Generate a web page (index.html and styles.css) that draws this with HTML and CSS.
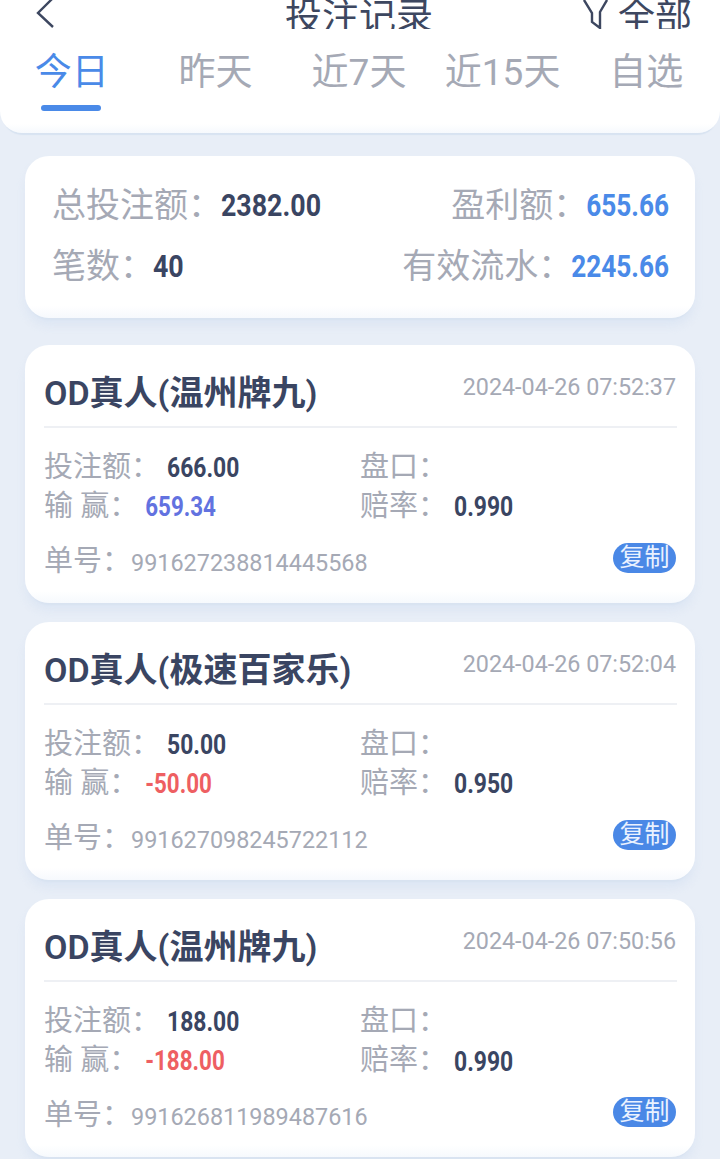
FILE: index.html
```html
<!DOCTYPE html>
<html lang="zh-CN">
<head>
  <meta charset="UTF-8">
  <meta name="viewport" content="width=device-width, initial-scale=1.0">
  <title>投注记录</title>
  <link rel="stylesheet" href="styles.css">
</head>
<body>
  <header class="header">
    <div class="title-bar">
      <svg class="back" width="24" height="29" viewBox="0 0 24 29">
        <path d="M19 -2L4 13l15 14" fill="none" stroke="#3d4760" stroke-width="2.4"/>
      </svg>
      <h1 class="title">投注记录</h1>
      <div class="filter">
        <svg width="25" height="29" viewBox="0 0 25 29">
          <path d="M1 0l8 13v9l8 6V12l7-12" fill="none" stroke="#3d4760" stroke-width="2.4"/>
        </svg>
        <span>全部</span>
      </div>
    </div>
    <nav class="tabs">
      <a class="tab active">今日</a>
      <a class="tab">昨天</a>
      <a class="tab">近7天</a>
      <a class="tab">近15天</a>
      <a class="tab">自选</a>
    </nav>
  </header>

  <section class="card summary">
    <div class="summary-row">
      <div>总投注额：<b class="num">2382.00</b></div>
      <div>盈利额：<b class="num blue">655.66</b></div>
    </div>
    <div class="summary-row">
      <div>笔数：<b class="num">40</b></div>
      <div>有效流水：<b class="num blue">2245.66</b></div>
    </div>
  </section>

  <section class="card record">
    <div class="record-head">
      <h2 class="game">OD真人(温州牌九)</h2>
      <time class="time">2024-04-26 07:52:37</time>
    </div>
    <div class="record-grid">
      <div class="field"><span class="label">投注额：</span><b class="val">666.00</b></div>
      <div class="field"><span class="label">盘口：</span></div>
      <div class="field"><span class="label">输 赢：</span><b class="val win">659.34</b></div>
      <div class="field"><span class="label">赔率：</span><b class="val">0.990</b></div>
    </div>
    <div class="record-foot">
      <div class="order"><span class="label">单号：</span><span class="order-no">991627238814445568</span></div>
      <span class="copy">复制</span>
    </div>
  </section>

  <section class="card record">
    <div class="record-head">
      <h2 class="game">OD真人(极速百家乐)</h2>
      <time class="time">2024-04-26 07:52:04</time>
    </div>
    <div class="record-grid">
      <div class="field"><span class="label">投注额：</span><b class="val">50.00</b></div>
      <div class="field"><span class="label">盘口：</span></div>
      <div class="field"><span class="label">输 赢：</span><b class="val lose">-50.00</b></div>
      <div class="field"><span class="label">赔率：</span><b class="val">0.950</b></div>
    </div>
    <div class="record-foot">
      <div class="order"><span class="label">单号：</span><span class="order-no">991627098245722112</span></div>
      <span class="copy">复制</span>
    </div>
  </section>

  <section class="card record">
    <div class="record-head">
      <h2 class="game">OD真人(温州牌九)</h2>
      <time class="time">2024-04-26 07:50:56</time>
    </div>
    <div class="record-grid">
      <div class="field"><span class="label">投注额：</span><b class="val">188.00</b></div>
      <div class="field"><span class="label">盘口：</span></div>
      <div class="field"><span class="label">输 赢：</span><b class="val lose">-188.00</b></div>
      <div class="field"><span class="label">赔率：</span><b class="val">0.990</b></div>
    </div>
    <div class="record-foot">
      <div class="order"><span class="label">单号：</span><span class="order-no">991626811989487616</span></div>
      <span class="copy">复制</span>
    </div>
  </section>
</body>
</html>
```

FILE: styles.css
```css
html {
  height: 100%;
  overflow: hidden;
}
body {
  margin: 0;
  height: 1159px;
  overflow: hidden;
  background-color: #e8eef7;
  font-family: Roboto, "Noto Sans CJK SC", sans-serif;
  color: #a5a9b5;
}
.header {
  height: 133px;
  background: linear-gradient(#fff 124px, #f6f9fd);
  border-radius: 0 0 22px 22px;
  box-shadow: 0 5px 1px -3px #d8e3f1;
  margin-bottom: 23px;
}
.title-bar {
  height: 29px;
  overflow: hidden;
  display: grid;
  grid-template-columns: 1fr auto 1fr;
  padding: 0 28px 0 26px;
  color: #3d4760;
}
.back {
  display: block;
  margin-left: 8px;
}
.title {
  margin: -4px 0 0;
  font-size: 37px;
  line-height: 44px;
  font-weight: 400;
  white-space: nowrap;
}
.filter {
  display: flex;
  justify-content: flex-end;
  gap: 10px;
  font-size: 37px;
  line-height: 44px;
}
.filter svg {
  display: block;
}
.filter span {
  margin-top: -4px;
}
.tabs {
  display: grid;
  grid-template-columns: repeat(5, 1fr);
  padding: 20px 2px 0 0;
}
.tab {
  position: relative;
  font-size: 37px;
  line-height: 48px;
  height: 62px;
  text-align: center;
  white-space: nowrap;
}
.tab.active {
  color: #4a8ae8;
}
.tab.active::after {
  content: "";
  position: absolute;
  left: 41px;
  width: 60px;
  bottom: 0;
  height: 6px;
  border-radius: 3px;
  background-color: #4a8ae8;
}
.card {
  margin: 0 25px;
  background: linear-gradient(#fff calc(100% - 12px), #f6f9fd);
  border-radius: 24px;
  box-shadow: 0 5px 2px -3px #d8e3f1, 0 8px 8px rgba(200, 215, 238, 0.3);
}
.summary {
  height: 162px;
  box-sizing: border-box;
  padding: 28px 26px 0 27px;
  margin-bottom: 27px;
}
.summary-row {
  display: flex;
  justify-content: space-between;
  align-items: center;
  height: 44px;
  margin-bottom: 17px;
  font-size: 34px;
  white-space: nowrap;
  line-height: 44px;
}
.num {
  display: inline-block;
  margin-left: -1px;
  font-size: 26.8px;
  font-weight: 700;
  color: #3a4562;
  transform: translateY(-3px) scaleY(1.18);
}
.num.blue {
  font-size: 26.2px;
  color: #4a8ae8;
}
.record {
  height: 258px;
  box-sizing: border-box;
  padding: 0 18px 0 19px;
  margin-bottom: 19px;
}
.record-head {
  display: flex;
  justify-content: space-between;
  height: 81px;
  border-bottom: 2px solid #eef0f4;
}
.game {
  margin: 26px 0 0;
  font-size: 34px;
  line-height: 44px;
  font-weight: 600;
  color: #3a4562;
}
.time {
  margin: 27px 1px 0 0;
  font-size: 23.3px;
  line-height: 30px;
}
.record-grid {
  display: grid;
  grid-template-columns: 316px 1fr;
  grid-auto-rows: 39px;
  padding-top: 20px;
}
.field {
  display: flex;
  align-items: center;
}
.label {
  font-size: 29px;
  line-height: 39px;
}
.val {
  display: inline-block;
  margin: 2px 0 0 7px;
  font-size: 22.9px;
  font-weight: 700;
  color: #3a4562;
  transform: scaleY(1.2);
}
.val.win {
  font-size: 22.4px;
  margin-top: -1px;
  color: #6272e0;
}
.val.lose {
  font-size: 22.4px;
  margin-top: -1px;
  color: #ee5f62;
}
.record-foot {
  display: flex;
  justify-content: space-between;
  align-items: center;
  margin-top: 16px;
  padding-right: 1px;
}
.order {
  display: flex;
  align-items: center;
}
.order-no {
  font-size: 23.4px;
  margin-top: 2px;
}
.copy {
  width: 63px;
  height: 30px;
  border-radius: 15px;
  background-color: #4a88e6;
  color: #eaf2ff;
  font-size: 25px;
  line-height: 30px;
  text-align: center;
  margin-top: -7px;
}
```
